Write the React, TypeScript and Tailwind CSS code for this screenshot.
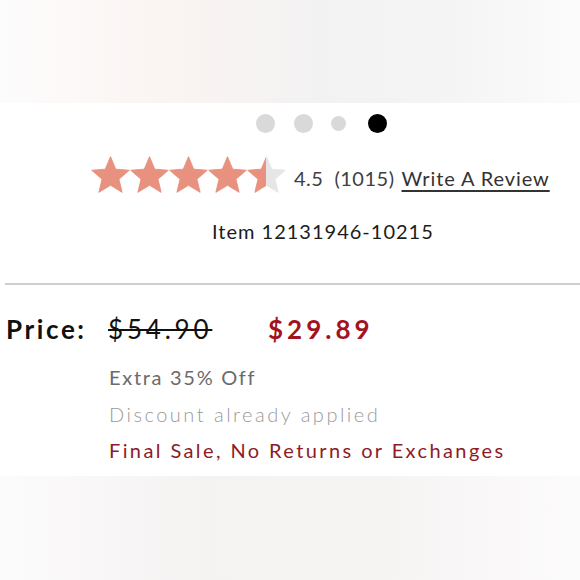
import React from "react";

const STAR =
  "M12 0L15.34 8.02L24 8.72L17.4 14.38L19.42 22.83L12 18.3L4.58 22.83L6.6 14.38L0 8.72L8.66 8.02Z";

function Star({ half }: { half?: boolean }) {
  return (
    <svg width="39" height="37" viewBox="-0.4 -0.4 24.8 23.63" className="block">
      {half && (
        <defs>
          <linearGradient id="halfgrad" x1="0" x2="1" y1="0" y2="0">
            <stop offset="50%" stopColor="#e8917f" />
            <stop offset="50%" stopColor="#e6e6e6" />
          </linearGradient>
        </defs>
      )}
      <path
        d={STAR}
        fill={half ? "url(#halfgrad)" : "#e8917f"}
        stroke={half ? "url(#halfgrad)" : "#e8917f"}
        strokeWidth="0.6"
        strokeLinejoin="round"
      />
    </svg>
  );
}

export default function App() {
  const font = { fontFamily: "Lato, 'Liberation Sans', sans-serif" };
  return (
    <div className="w-[580px] h-[580px] overflow-hidden bg-white" style={font}>
      <div className="h-[103px] bg-[linear-gradient(90deg,#fdfcfc_0%,#faf4f2_30%,#f3f2f2_55%,#f4f4f4_75%,#fbfbfb_100%)]" />
      <div className="h-[373px] bg-white pt-[10px]">
        <div className="flex items-center h-[20px] pl-[256px]">
          <div className="w-[19px] h-[19px] rounded-full bg-[#d9d9d9]" />
          <div className="w-[19px] h-[19px] rounded-full bg-[#d9d9d9] ml-[19px]" />
          <div className="w-[15px] h-[15px] rounded-full bg-[#d9d9d9] ml-[18px]" />
          <div className="w-[19px] h-[19px] rounded-full bg-black ml-[22px]" />
        </div>
        <div className="flex items-center mt-[23px] pl-[91px] h-[37px]">
          <Star />
          <Star />
          <Star />
          <Star />
          <Star half />
          <span className="ml-[8px] text-[20px] text-[#3f3f3f] tracking-[0.5px] mt-[6px]">4.5</span>
          <span className="ml-[11px] text-[20px] text-[#3f3f3f] tracking-[0.5px] mt-[6px]">(1015)</span>
          <span className="ml-[7px] text-[20px] text-[#333] underline underline-offset-[4px] decoration-[1.5px] tracking-[0.9px] mt-[6px]">
            Write A Review
          </span>
        </div>
        <div className="mt-[24px] pl-[212px] text-[20px] text-[#1c1c1c] tracking-[1px] leading-[28px]">Item 12131946-10215</div>
        <div className="mt-[38px] ml-[5px] h-[2px] bg-[#cfcfcf]" />
        <div className="flex items-baseline mt-[25px] pl-[6px]">
          <span className="text-[26px] font-bold text-[#111] tracking-[2.6px] w-[102px]">Price:</span>
          <span className="text-[26px] font-normal text-[#111] line-through tracking-[3.8px] decoration-[2px] w-[160px]">$54.90</span>
          <span className="text-[26px] font-bold text-[#a3121f] tracking-[4px]">$29.89</span>
        </div>
        <div className="pl-[109px] mt-[14px] text-[20px] text-[#6b6b6b] tracking-[1.7px] leading-[28px]">Extra 35% Off</div>
        <div className="pl-[109px] mt-[9px] text-[20px] font-light text-[#9a9a9a] tracking-[2.5px] leading-[28px]">Discount already applied</div>
        <div className="pl-[109px] mt-[8px] text-[20px] text-[#8e1b26] tracking-[2.4px] leading-[28px]">Final Sale, No Returns or Exchanges</div>
      </div>
      <div className="h-[104px] bg-[linear-gradient(90deg,#fcfbfb_0%,#f5f2f2_35%,#f6f3f3_65%,#fcfbfb_100%)]" />
    </div>
  );
}
